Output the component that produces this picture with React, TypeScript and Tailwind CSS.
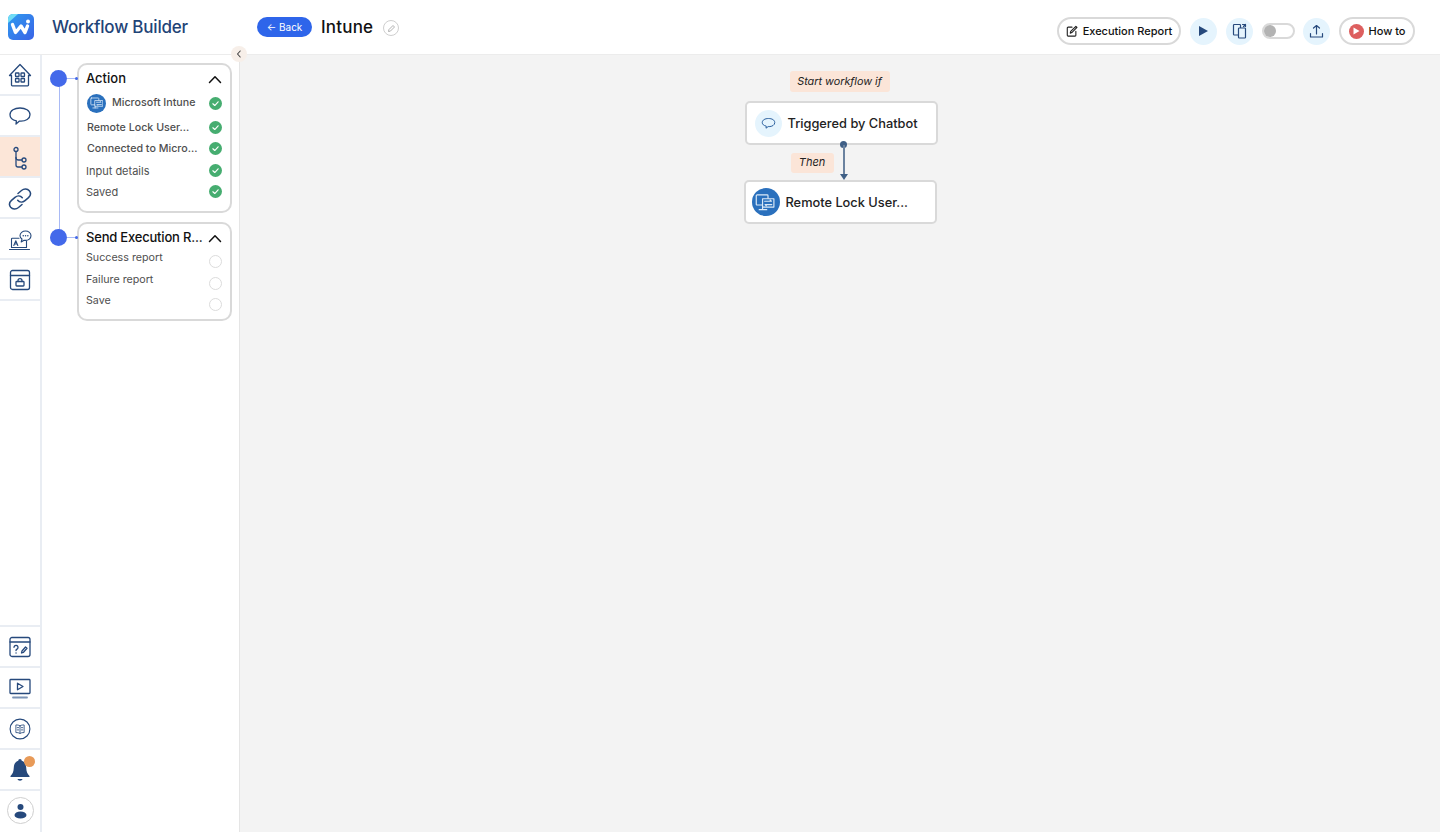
import React from "react";

const navy = "#26497c";

function Stroke({ children, size = 24, box = "0 0 24 24", sw = 1.3 }: { children: React.ReactNode; size?: number; box?: string; sw?: number }) {
  return (
    <svg width={size} height={size} viewBox={box} fill="none" stroke={navy} strokeWidth={sw} strokeLinecap="round" strokeLinejoin="round">
      {children}
    </svg>
  );
}

const Home = () => (
  <Stroke>
    <path d="M1.500 12.500 12 1.500 22.500 12.500h-2v9.500q0 .8-.8.8H4.300q-.8 0-.8-.8v-9.500z" />
    <rect x="7.500" y="10" width="3.500" height="3.500" rx=".6" />
    <rect x="13" y="10" width="3.500" height="3.500" rx=".6" />
    <rect x="7.500" y="15.500" width="3.500" height="3.500" rx=".6" />
    <rect x="13" y="15.500" width="3.500" height="3.500" rx=".6" />
  </Stroke>
);
const Chat = () => (
  <Stroke>
    <path d="M12 4c5.500 0 10 2.600 10 6.700s-4.500 6.500-9 6.500c-.6 0-1 0-1.500-.1L8 20l.4-3.200C4.500 16 2 13.500 2 10.700 2 6.600 6.500 4 12 4z" />
  </Stroke>
);
const Flow = () => (
  <Stroke>
    <circle cx="8" cy="3.500" r="2" />
    <path d="M8 5.500V19q0 2 2 2h4" />
    <path d="M8 11.500q0 2.500 2.500 2.500h3.500" />
    <circle cx="16" cy="14" r="2" />
    <circle cx="16" cy="21" r="2" />
  </Stroke>
);
const LinkI = () => (
  <Stroke sw={1.5}>
    <path d="M10 6.500 13.500 3.500c2.500-2 6-1.800 7.800.3 1.800 2.200 1.200 5-.8 6.800l-3.500 3c-2.400 2-5.500 1.800-7.300-.3" />
    <path d="M14 17.500 10.500 20.500c-2.500 2-6 1.800-7.800-.3-1.800-2.200-1.200-5 .8-6.800l3.500-3c2.400-2 5.500-1.800 7.300.3" />
  </Stroke>
);
const Agent = () => (
  <Stroke sw={1.1}>
    <path d="M3.500 19.500V11q0-.8.8-.8H11" />
    <path d="M18.500 13v6.500" />
    <path d="M1.500 21.500h20M3.500 19.500h15" />
    <path d="M5.800 17.500 7.800 12.800 9.800 17.500M6.500 16h2.600" />
    <path d="M17.500 3c3 0 5.500 2 5.500 4.700s-2.500 4.700-5.500 4.700c-.6 0-1 0-1.400-.2L13.200 14l.8-3c-1.300-.8-2-2-2-3.300C12 5 14.500 3 17.500 3z" />
    <path d="M15.200 7.700h.1M17.500 7.700h.1M19.800 7.700h.1" strokeWidth="1.400" />
  </Stroke>
);
const Lock = () => (
  <Stroke>
    <rect x="2.500" y="2.500" width="19" height="19" rx="2" />
    <path d="M2.500 7.500h19" />
    <rect x="8" y="13.500" width="8" height="4.500" rx=".8" />
    <path d="M10 13.500v-.8a2 2 0 0 1 4 0v.8" />
  </Stroke>
);
const Help = () => (
  <Stroke>
    <rect x="2" y="2.500" width="20" height="19" rx="2" />
    <path d="M2 7h20" />
    <path d="M6 12.300a2 2 0 1 1 3 1.800c-.7.400-1 .8-1 1.400M8 18h.1" />
    <path d="M13.500 18l.5-2 3.500-4 1.500 1.300-3.500 4z" />
  </Stroke>
);
const Video = () => (
  <Stroke>
    <rect x="2" y="3.500" width="20" height="14" rx=".8" />
    <path d="M9.500 7.200v6.600l5.500-3.300z" />
    <path d="M5 21.500h14" strokeWidth="1.800" stroke="#7b93b5" />
  </Stroke>
);
const Book = () => (
  <Stroke size={22} sw={1.2}>
    <circle cx="12" cy="12" r="10.800" />
    <path d="M12 8.500c-1.200-.8-3-1-4.500-.9v8.300c1.500-.1 3.300.1 4.500.9 1.200-.8 3-1 4.500-.9V7.600c-1.500-.1-3.300.1-4.500.9zM12 8.500v8.300M9 10.500h1.500M9 13h1.500M13.500 10.500H15M13.500 13H15" strokeWidth=".9" />
  </Stroke>
);
const Bell = () => (
  <svg width="24" height="24" viewBox="0 0 24 24" fill={navy}>
    <path d="M12 1c1 0 1.700.8 1.700 1.700 3 1 4.300 3.500 4.500 6.800.2 4 1 6.300 3.300 8.500v1H2.500v-1c2.300-2.200 3.100-4.500 3.300-8.500.2-3.300 1.500-5.800 4.500-6.800C10.300 1.800 11 1 12 1z" />
    <path d="M9.500 21h5c-.3 1-1.200 1.700-2.500 1.700S9.800 22 9.500 21z" />
  </svg>
);

const Intune = ({ size }: { size: number }) => (
  <span className="flex items-center justify-center rounded-full bg-[#2a70bd] shrink-0" style={{ width: size, height: size }}>
    <svg width={size * 0.72} height={size * 0.72} viewBox="0 0 24 24" fill="none" stroke="#dbe9f7" strokeWidth="1.400" strokeLinecap="round" strokeLinejoin="round">
      <rect x="1.500" y="3.500" width="14" height="12" rx="1" />
      <path d="M9 8h13.500v10H9z" fill="#2a70bd" />
      <path d="M11.500 11h8l-1.500-1.500M20 15h-8l1.500 1.500" />
      <path d="M5 21h9M9 18v3" />
    </svg>
  </span>
);

const Check = () => (
  <span className="flex h-[13px] w-[13px] items-center justify-center rounded-full bg-[#46ad70]">
    <svg width="9" height="9" viewBox="0 0 12 12" fill="none" stroke="#fff" strokeWidth="1.500" strokeLinecap="round" strokeLinejoin="round">
      <path d="M2.500 6.300 5 8.700l4.500-5" />
    </svg>
  </span>
);
const Empty = () => <span className="block h-[13px] w-[13px] rounded-full border border-[#dcdcdc] bg-white" />;
const Chevron = () => (
  <svg width="14" height="9" viewBox="0 0 14 9" fill="none" stroke="#111" strokeWidth="1.500" strokeLinecap="round" strokeLinejoin="round" className="shrink-0">
    <path d="M1.500 7.500 7 1.800l5.500 5.700" />
  </svg>
);

function NavCell({ children, active, h, pad }: { children: React.ReactNode; active?: boolean; h: string; pad?: boolean }) {
  return (
    <div className={`flex items-center justify-center border-b-2 border-[#e9edf3] ${h} ${pad ? "pt-[2px]" : ""} ${active ? "bg-[#fce6d8]" : ""}`}>
      {children}
    </div>
  );
}

function Row({ label, done, mt, weight, text, icon }: { label: string; done?: boolean; mt: string; weight?: string; text: string; icon?: boolean }) {
  return (
    <div className={`flex h-[14px] items-center justify-between pr-[8px] ${mt}`}>
      <div className={`flex items-center gap-[6px] text-[#4f4f4f] ${weight ?? "text-[11px] pl-[7px]"}`}>
        {icon && <Intune size={19} />}
        <span className={text}>{label}</span>
      </div>
      {done ? <Check /> : <Empty />}
    </div>
  );
}

const Dot = () => <span className="block h-[17px] w-[17px] rounded-full bg-[#4369ea]" />;

function Connector() {
  return (
    <>
      <span className="absolute -left-[29px] top-[5px]"><Dot /></span>
      <span className="absolute -left-[12px] top-[13px] h-px w-[10px] bg-[#a9baf5]" />
      <span className="absolute -left-[4px] top-[12px] h-[3px] w-[3px] rounded-full bg-[#4369ea]" />
    </>
  );
}

const boldRow = "text-[10.700px] font-medium pl-[8px]";
const smallBorder = "border-2 border-[#d9d9d9]";

export default function App() {
  return (
    <div className="flex h-[832px] w-[1440px] flex-col overflow-hidden bg-white font-['Inter',sans-serif] text-[#111]">
      <header className="flex h-[55px] shrink-0 items-center border-b border-[#ececec] bg-white pl-[8px] pr-[25px]">
        <svg width="26" height="26" viewBox="0 0 26 26" className="shrink-0 mb-[1px]">
          <defs>
            <linearGradient id="lg" x1="0" y1="0" x2="1" y2="1">
              <stop offset="0" stopColor="#2f9cf0" />
              <stop offset="1" stopColor="#3a62e6" />
            </linearGradient>
          </defs>
          <rect width="26" height="26" rx="5" fill="url(#lg)" />
          <path d="M0 9V5a5 5 0 0 1 5-5h5z" fill="#6fdcf5" />
          <path d="M4.500 10.500 7.500 18.500 13 12 17 18.500 19.500 12" fill="none" stroke="#fff" strokeWidth="3.400" strokeLinecap="round" strokeLinejoin="round" />
          <circle cx="20" cy="7.500" r="2" fill="#fff" />
        </svg>
        <div className="ml-[18px] w-[205px] pt-[2px] text-[17px] font-medium tracking-[-0.2px] text-[#1f4477]">Workflow Builder</div>
        <button className="flex h-[20px] w-[55px] items-center justify-center rounded-full bg-[#2e65ea] text-[10px] text-white">← Back</button>
        <div className="ml-[9px] pt-[2px] text-[17px] font-medium tracking-[0.2px] text-[#111]">Intune</div>
        <span className="ml-[10px] mt-[2px] flex h-[16px] w-[16px] items-center justify-center rounded-full border border-[#cfcfcf]">
          <svg width="9" height="9" viewBox="0 0 12 12" fill="none" stroke="#a8a8a8" strokeWidth="1.200" strokeLinejoin="round"><path d="M2 10l.5-2.500L8 2l2 2-5.500 5.500z" /></svg>
        </span>
        <div className="ml-auto flex items-center pt-[8px]">
          <button className={`flex h-[28px] w-[124px] items-center justify-center gap-[5px] rounded-full ${smallBorder} bg-white text-[11px] font-medium text-[#111]`}>
            <svg width="12" height="12" viewBox="0 0 14 14" fill="none" stroke="#222" strokeWidth="1.300" strokeLinecap="round" strokeLinejoin="round">
              <path d="M11.500 7.500V12a1 1 0 0 1-1 1H2.500a1 1 0 0 1-1-1V3.500a1 1 0 0 1 1-1H7" />
              <path d="M5 9.500l.5-2L11.500 1.500l1.300 1.300-6 6z" />
            </svg>
            Execution Report
          </button>
          <span className="ml-[9px] flex h-[27px] w-[27px] items-center justify-center rounded-full bg-[#e5f4fd]">
            <svg width="11" height="12" viewBox="0 0 11 12"><path d="M1 1 10 6 1 11z" fill={navy} /></svg>
          </span>
          <span className="ml-[9px] flex h-[27px] w-[27px] items-center justify-center rounded-full bg-[#e5f4fd]">
            <svg width="16" height="16" viewBox="0 0 16 16" fill="none" stroke={navy} strokeWidth="1.200" strokeLinejoin="round" strokeLinecap="round">
              <rect x="1.500" y="1.500" width="7" height="10.500" rx=".8" />
              <rect x="6.500" y="5" width="7" height="10" rx=".8" fill="#e5f4fd" />
              <path d="M10.500 1.500h3v2M13.500 1.500l-2 2" />
            </svg>
          </span>
          <span className={`ml-[9px] flex h-[16px] w-[33px] items-center rounded-full ${smallBorder} bg-white`}>
            <span className="block h-[12px] w-[12px] rounded-full bg-[#b3b3b3]" />
          </span>
          <span className="ml-[8px] flex h-[27px] w-[27px] items-center justify-center rounded-full bg-[#e5f4fd]">
            <svg width="15" height="15" viewBox="0 0 15 15" fill="none" stroke={navy} strokeWidth="1.200" strokeLinecap="round" strokeLinejoin="round">
              <path d="M7.500 10V1.500M4.500 4l3-2.500 3 2.500M1.500 9.500v3.500h12V9.500" />
            </svg>
          </span>
          <button className={`ml-[9px] flex h-[28px] w-[76px] items-center justify-center gap-[5px] rounded-full ${smallBorder} bg-white text-[11px] font-medium text-[#111]`}>
            <span className="flex h-[15px] w-[15px] items-center justify-center rounded-full bg-[#dd5f5f]">
              <svg width="7" height="8" viewBox="0 0 7 8"><path d="M.5.500 6.500 4 .5 7.500z" fill="#fff" /></svg>
            </span>
            How to
          </button>
        </div>
      </header>

      <div className="flex min-h-0 flex-1">
        <nav className="flex w-[42px] shrink-0 flex-col justify-between border-r-2 border-[#e9edf3] bg-white">
          <div>
            <NavCell h="h-[41px]"><Home /></NavCell>
            <NavCell h="h-[41px]"><Chat /></NavCell>
            <NavCell h="h-[41px]" active pad><Flow /></NavCell>
            <NavCell h="h-[41px]" pad><LinkI /></NavCell>
            <NavCell h="h-[41px]" pad><Agent /></NavCell>
            <NavCell h="h-[41px]"><Lock /></NavCell>
          </div>
          <div className="border-t-2 border-[#e9edf3]">
            <NavCell h="h-[41px]"><Help /></NavCell>
            <NavCell h="h-[41px]"><Video /></NavCell>
            <NavCell h="h-[41px]"><Book /></NavCell>
            <NavCell h="h-[41px]">
              <span className="relative flex">
                <Bell />
                <span className="absolute -right-[3px] -top-[2px] h-[11px] w-[11px] rounded-full bg-[#e89a58]" />
              </span>
            </NavCell>
            <div className="flex h-[41px] items-center justify-center pb-[2px]">
              <span className="flex h-[27px] w-[27px] items-center justify-center rounded-full border border-[#cfcfcf]">
                <svg width="15" height="16" viewBox="0 0 15 16" fill={navy}>
                  <circle cx="7.500" cy="4" r="3" />
                  <ellipse cx="7.500" cy="12" rx="6" ry="3.600" />
                </svg>
              </span>
            </div>
          </div>
        </nav>

        <aside className="relative w-[198px] shrink-0 border-r border-[#e5e5e5] bg-white pl-[8px] pt-[8px]">
          <button className="absolute -right-[8px] -top-[9px] z-10 flex h-[16px] w-[16px] items-center justify-center rounded-full bg-[#f7efe9]">
            <svg width="8" height="8" viewBox="0 0 8 8" fill="none" stroke="#444" strokeWidth="1.100" strokeLinecap="round" strokeLinejoin="round"><path d="M5.200 1 2.500 4l2.700 3" /></svg>
          </button>
          <span className="absolute left-[17px] top-[30px] h-[160px] w-px bg-[#a9baf5]" />
          <div className="relative flex flex-col gap-[9px] pl-[27px]">
            <section className={`relative h-[150px] w-[155px] rounded-[10px] ${smallBorder} bg-white`}>
              <Connector />
              <div className="flex h-[26px] items-center justify-between pl-[7px] pr-[8px] pt-[2px] text-[13px] font-medium text-[#111]">
                <span>Action</span>
                <Chevron />
              </div>
              <Row label="Microsoft Intune" done mt="mt-[5px]" weight={boldRow} text="" icon />
              <Row label="Remote Lock User..." done mt="mt-[10px]" weight={boldRow} text="pt-[3px]" />
              <Row label="Connected to Micro..." done mt="mt-[7px]" weight={boldRow} text="pt-[3px]" />
              <Row label="Input details" done mt="mt-[8px]" text="pt-[2px]" />
              <Row label="Saved" done mt="mt-[7px]" text="pt-[2px]" />
            </section>
            <section className={`relative h-[99px] w-[155px] rounded-[10px] ${smallBorder} bg-white`}>
              <Connector />
              <div className="flex h-[26px] items-center justify-between pl-[7px] pr-[8px] pt-[2px] text-[13px] font-medium tracking-[-0.2px] text-[#111]">
                <span>Send Execution R...</span>
                <Chevron />
              </div>
              <Row label="Success report" mt="mt-[4px]" text="pb-[6px] text-[10.700px]" />
              <Row label="Failure report" mt="mt-[8px]" text="pb-[6px] text-[10.700px]" />
              <Row label="Save" mt="mt-[7px]" text="pb-[6px] text-[10.700px]" />
            </section>
          </div>
        </aside>

        <main className="flex min-w-0 flex-1 justify-center bg-[#f3f3f3]">
          <div className="ml-[3px] flex w-[200px] flex-col items-start pt-[16px]">
            <div className="ml-[48px] flex h-[21px] w-[100px] items-center justify-center rounded-[3px] bg-[#fbe5d8] pt-[2px] text-[10.800px] italic text-[#222]">Start workflow if</div>
            <div className={`ml-[3px] mt-[9px] flex h-[44px] w-[193px] items-center gap-[6px] rounded-[5px] ${smallBorder} bg-white pl-[8px] text-[12.800px] font-medium text-[#222]`}>
              <span className="flex h-[27px] w-[27px] items-center justify-center rounded-full bg-[#e5f4fd]">
                <svg width="15" height="15" viewBox="0 0 24 24" fill="none" stroke="#2a5f9e" strokeWidth="1.600" strokeLinejoin="round">
                  <path d="M12 4c5.500 0 10 2.400 10 6.500S17.500 17 13 17c-.6 0-1 0-1.500-.1L8 19.500l.4-3.300C4.500 15.400 2 13.300 2 10.500 2 6.400 6.500 4 12 4z" />
                </svg>
              </span>
              <span className="pt-[2px]">Triggered by Chatbot</span>
            </div>
            <div className="relative flex h-[35px] w-full items-center">
              <span className="ml-[49px] flex h-[20px] w-[43px] items-center justify-center rounded-[3px] bg-[#fbe5d8] text-[11px] italic text-[#222]">Then</span>
              <span className="absolute left-[98px] top-[-4px] h-[7px] w-[7px] rounded-full bg-[#3f5f86]" />
              <span className="absolute left-[101px] top-0 h-[31px] w-[2px] bg-[#6b829f]" />
              <span className="absolute bottom-0 left-[98px] h-0 w-0 border-x-[4px] border-t-[6px] border-x-transparent border-t-[#3f5f86]" />
            </div>
            <div className={`ml-[2px] flex h-[44px] w-[193px] items-center gap-[6px] rounded-[5px] ${smallBorder} bg-white pl-[6px] text-[12.800px] font-medium text-[#222]`}>
              <Intune size={28} />
              <span className="pt-[2px]">Remote Lock User...</span>
            </div>
          </div>
        </main>
      </div>
    </div>
  );
}
